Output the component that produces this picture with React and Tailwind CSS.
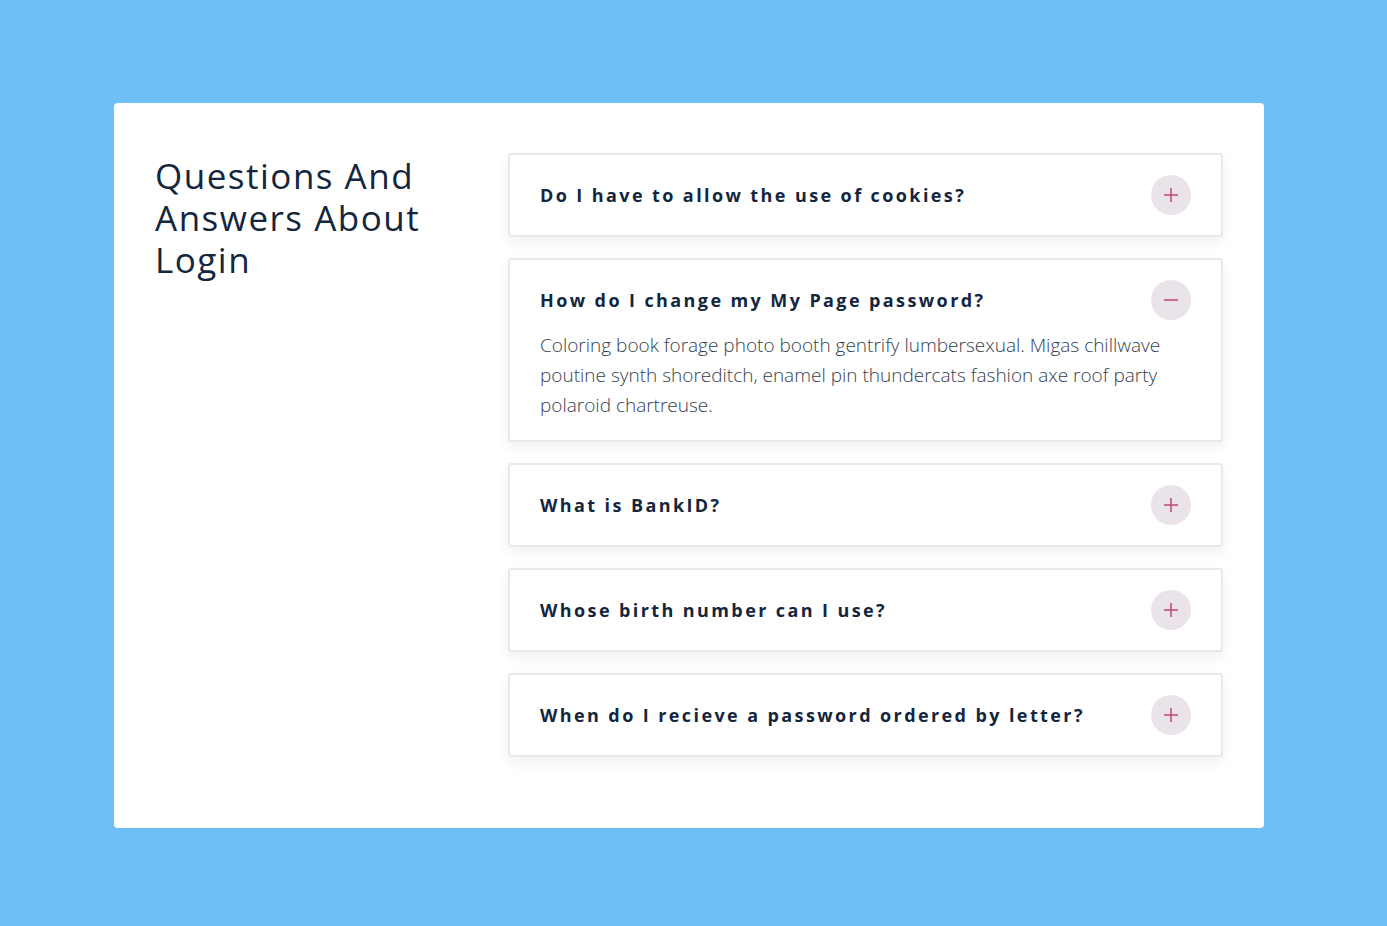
import { useState } from 'react';

const answer =
  'Coloring book forage photo booth gentrify lumbersexual. Migas chillwave poutine synth shoreditch, enamel pin thundercats fashion axe roof party polaroid chartreuse.';

const faqs = [
  { q: 'Do I have to allow the use of cookies?', a: answer },
  { q: 'How do I change my My Page password?', a: answer },
  { q: 'What is BankID?', a: answer },
  { q: 'Whose birth number can I use?', a: answer },
  { q: 'When do I recieve a password ordered by letter?', a: answer },
];

function Toggle({ open }) {
  return (
    <span className="flex h-10 w-10 shrink-0 items-center justify-center rounded-full bg-[#ebe3ea]">
      <svg width="14" height="14" viewBox="0 0 14 14" fill="none" stroke="#c0507a" strokeWidth="1.6">
        <path d="M0 7h14" />
        {!open && <path d="M7 0v14" />}
      </svg>
    </span>
  );
}

export default function App() {
  const [openIndex, setOpenIndex] = useState(1);

  return (
    <div className="min-h-[926px] bg-[#6ebff6] pl-[114px] pt-[103px] font-['Open_Sans',sans-serif]">
      <div className="flex w-[1150px] gap-[53px] rounded bg-white pb-[71px] pl-[41px] pr-[41px] pt-[50px]">
        <h1 className="w-[300px] shrink-0 pt-[2px] text-[35px] font-medium leading-[42px] tracking-[1.5px] text-[#13263d]">
          Questions And Answers About Login
        </h1>

        <div className="flex flex-1 flex-col gap-[21px]">
          {faqs.map((item, index) => {
            const open = openIndex === index;
            return (
              <div key={item.q} className="rounded-[3px] border-2 border-[#ede6ec] bg-white px-[30px] shadow-[0_6px_14px_rgba(0,0,0,0.06)]">
                <button
                  onClick={() => setOpenIndex(open ? -1 : index)}
                  className="flex h-[80px] w-full items-center justify-between text-left"
                >
                  <span className="text-[18px] font-bold tracking-[2.4px] text-[#13263d]">{item.q}</span>
                  <Toggle open={open} />
                </button>
                {open && (
                  <p className="-mt-[10px] pb-[20px] text-[19px] font-light leading-[30px] text-[#343f4f]">
                    {item.a}
                  </p>
                )}
              </div>
            );
          })}
        </div>
      </div>
    </div>
  );
}
